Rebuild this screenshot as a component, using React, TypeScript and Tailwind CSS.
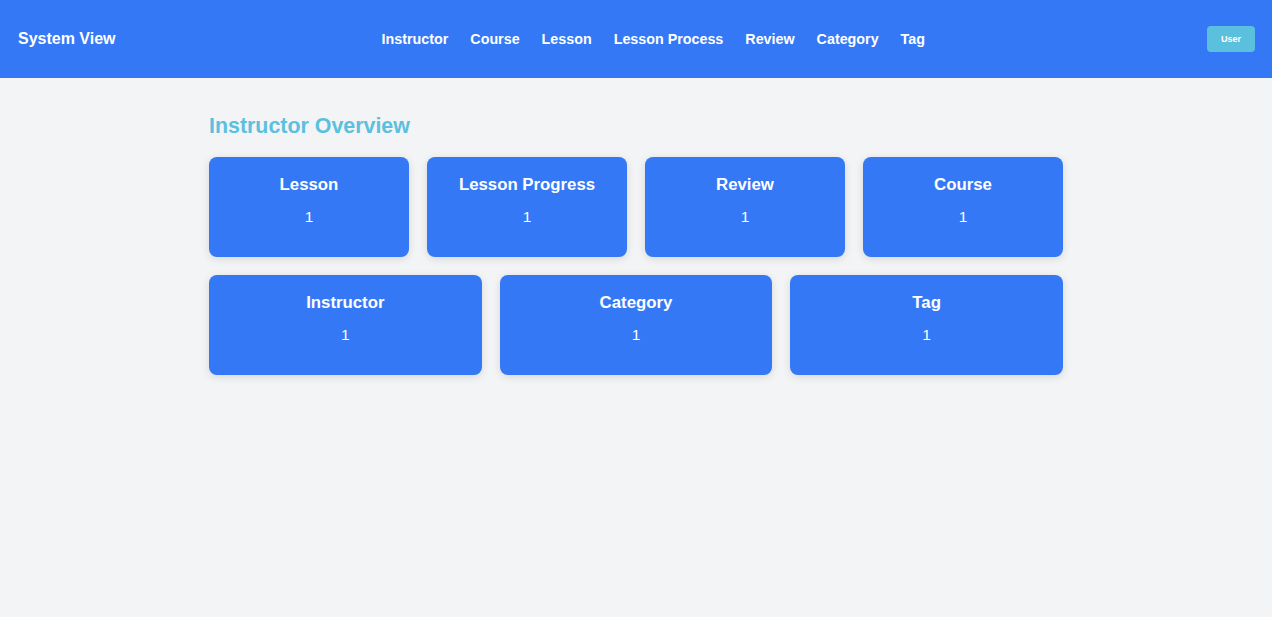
import React from "react";

const navItems = ["Instructor", "Course", "Lesson", "Lesson Process", "Review", "Category", "Tag"];
const row1 = ["Lesson", "Lesson Progress", "Review", "Course"];
const row2 = ["Instructor", "Category", "Tag"];

function Card({ title }: { title: string }) {
  return (
    <div className="h-[100px] rounded-lg bg-[#3578f6] shadow-[0_2px_8px_rgba(0,0,0,0.12)] flex flex-col items-center pt-[18px] text-white">
      <div className="text-[16.8px] leading-[20px] font-bold">{title}</div>
      <div className="mt-[13px] text-[15.5px] leading-[18px]">1</div>
    </div>
  );
}

export default function App() {
  return (
    <div className="min-h-[617px] bg-[#f3f4f6] font-['Liberation_Sans',Arial,sans-serif]">
      <header className="h-[78px] bg-[#3578f6] flex items-center justify-between pl-[18px] pr-[17px]">
        <div className="text-white font-bold text-[16px] leading-[20px]">System View</div>
        <nav className="flex items-center gap-[22px] mr-[16px]">
          {navItems.map((n) => (
            <a key={n} className="text-white font-bold text-[14.3px] leading-[18px]">
              {n}
            </a>
          ))}
        </nav>
        <button className="w-[48px] h-[26px] rounded-[4px] bg-[#5bc0de] text-white text-[9px] leading-none font-bold flex items-center justify-center">
          User
        </button>
      </header>
      <main className="w-[854px] mx-auto pt-[35px]">
        <h1 className="text-[21.4px] leading-[26px] font-bold text-[#5bc0de]">Instructor Overview</h1>
        <div className="mt-[18px] grid grid-cols-4 gap-[18px]">
          {row1.map((t) => (
            <Card key={t} title={t} />
          ))}
        </div>
        <div className="mt-[18px] grid grid-cols-3 gap-[18px]">
          {row2.map((t) => (
            <Card key={t} title={t} />
          ))}
        </div>
      </main>
    </div>
  );
}
